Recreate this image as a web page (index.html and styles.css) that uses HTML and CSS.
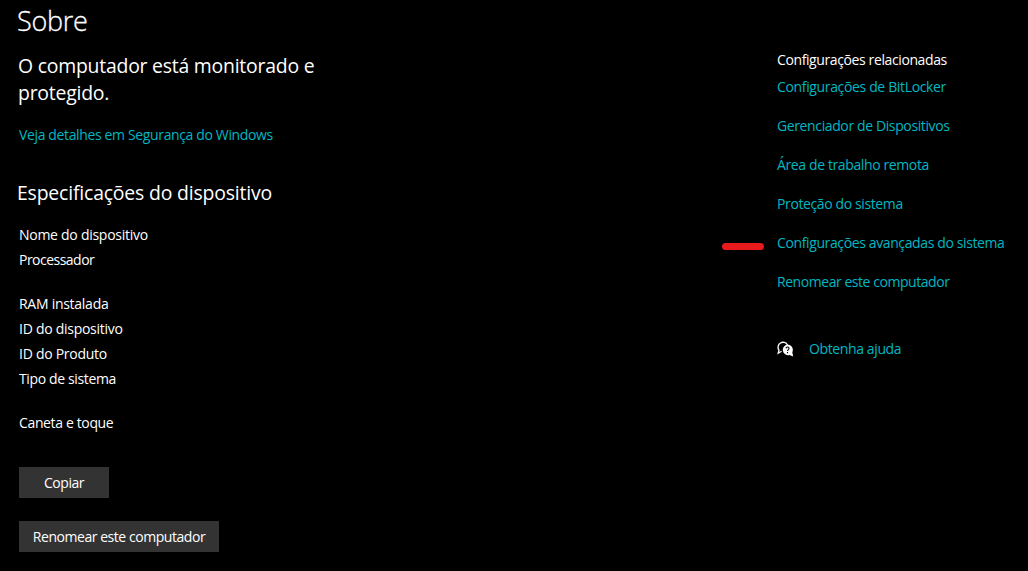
FILE: index.html
```
<!DOCTYPE html>
<html lang="pt-BR">
<head>
<meta charset="utf-8">
<title>Sobre</title>
<link rel="stylesheet" href="styles.css">
</head>
<body>
<main class="page">
  <section class="about">
    <h1 class="title">Sobre</h1>
    <h2 class="status">O computador está monitorado e<br>protegido.</h2>
    <a class="link security">Veja detalhes em Segurança do Windows</a>
    <h2 class="specs-title">Especificações do dispositivo</h2>
    <ul class="specs">
      <li>Nome do dispositivo</li>
      <li class="tall processor">Processador</li>
      <li>RAM instalada</li>
      <li>ID do dispositivo</li>
      <li>ID do Produto</li>
      <li class="tall system-type">Tipo de sistema</li>
      <li class="pen">Caneta e toque</li>
    </ul>
    <button class="button copy">Copiar</button>
    <button class="button rename">Renomear este computador</button>
  </section>
  <aside class="related">
    <h3 class="related-title">Configurações relacionadas</h3>
    <nav class="links">
      <a class="link bitlocker">Configurações de BitLocker</a>
      <a class="link">Gerenciador de Dispositivos</a>
      <a class="link">Área de trabalho remota</a>
      <a class="link">Proteção do sistema</a>
      <a class="link marked">Configurações avançadas do sistema</a>
      <a class="link rename-link">Renomear este computador</a>
    </nav>
    <div class="help">
      <svg class="help-icon" viewBox="0 0 17 17" width="17" height="17">
        <path d="M4.600 10.300 1.200 12.200 2 9.200A5 5 0 1 1 10.500 4" fill="none" stroke="#fff" stroke-width="1.300"/>
        <path d="M10.500 3.600a5.300 5.300 0 0 1 4.800 7.600l.9 4.300-3.800-1.500A5.300 5.300 0 1 1 10.500 3.600z" fill="#fff"/>
        <path d="M9 7.400c.1-2 3.200-1.800 3 .1-.1 1.100-1.500 1.200-1.500 2.500M10.500 11v1.200" fill="none" stroke="#000" stroke-width="1.100"/>
      </svg>
      <a class="link">Obtenha ajuda</a>
    </div>
  </aside>
</main>
</body>
</html>
```
FILE: styles.css
```
* { box-sizing: border-box; margin: 0; padding: 0; }
body { background: #000; color: #fff; font: 14px/20px "Open Sans", sans-serif; }
.page { display: flex; justify-content: space-between; width: 1028px; height: 571px; overflow: hidden; }
.about { display: flex; flex-direction: column; align-items: flex-start; padding: 3px 0 0 18px; }
h1, h2, h3 { font-weight: 400; white-space: nowrap; }
.title { margin-left: -1px; font-size: 27px; font-weight: 300; line-height: 36px; letter-spacing: -0.3px; -webkit-text-stroke: 0.3px #fff; }
.status { margin-top: 13px; font-size: 19.4px; line-height: 27px; letter-spacing: -0.22px; }
.link { color: #00b7c3; white-space: nowrap; letter-spacing: -0.38px; }
.security { margin: 19px 0 0 1px; letter-spacing: -0.36px; }
.specs-title { margin: 34px 0 0 -1px; font-size: 19.4px; line-height: 28px; letter-spacing: -0.17px; }
.specs { list-style: none; margin: 15px 0 0 1px; letter-spacing: -0.27px; }
.specs li { height: 25px; line-height: 25px; }
.specs .tall { height: 44px; }
.specs .processor { letter-spacing: -0.52px; }
.specs .system-type { letter-spacing: -0.36px; }
.specs .pen { letter-spacing: -0.36px; }
.button { height: 31px; margin-left: 1px; border: 0; background: #333; color: #fff; font: inherit; letter-spacing: -0.45px; white-space: nowrap; }
.copy { width: 90px; margin-top: 32px; }
.rename { width: 200px; margin-top: 23px; }
.related { width: 251px; padding-top: 50px; }
.related-title { font-size: 14px; line-height: 20px; letter-spacing: -0.39px; }
.links { display: grid; gap: 19px; margin-top: 7px; }
.bitlocker { letter-spacing: -0.35px; }
.rename-link { letter-spacing: -0.45px; }
.marked { position: relative; }
.marked::before { content: ""; position: absolute; left: -55px; top: 10px; width: 42px; height: 7px; border-radius: 4px; background: #e81a1c; }
.help { display: flex; align-items: center; gap: 15px; margin-top: 47px; }
```
